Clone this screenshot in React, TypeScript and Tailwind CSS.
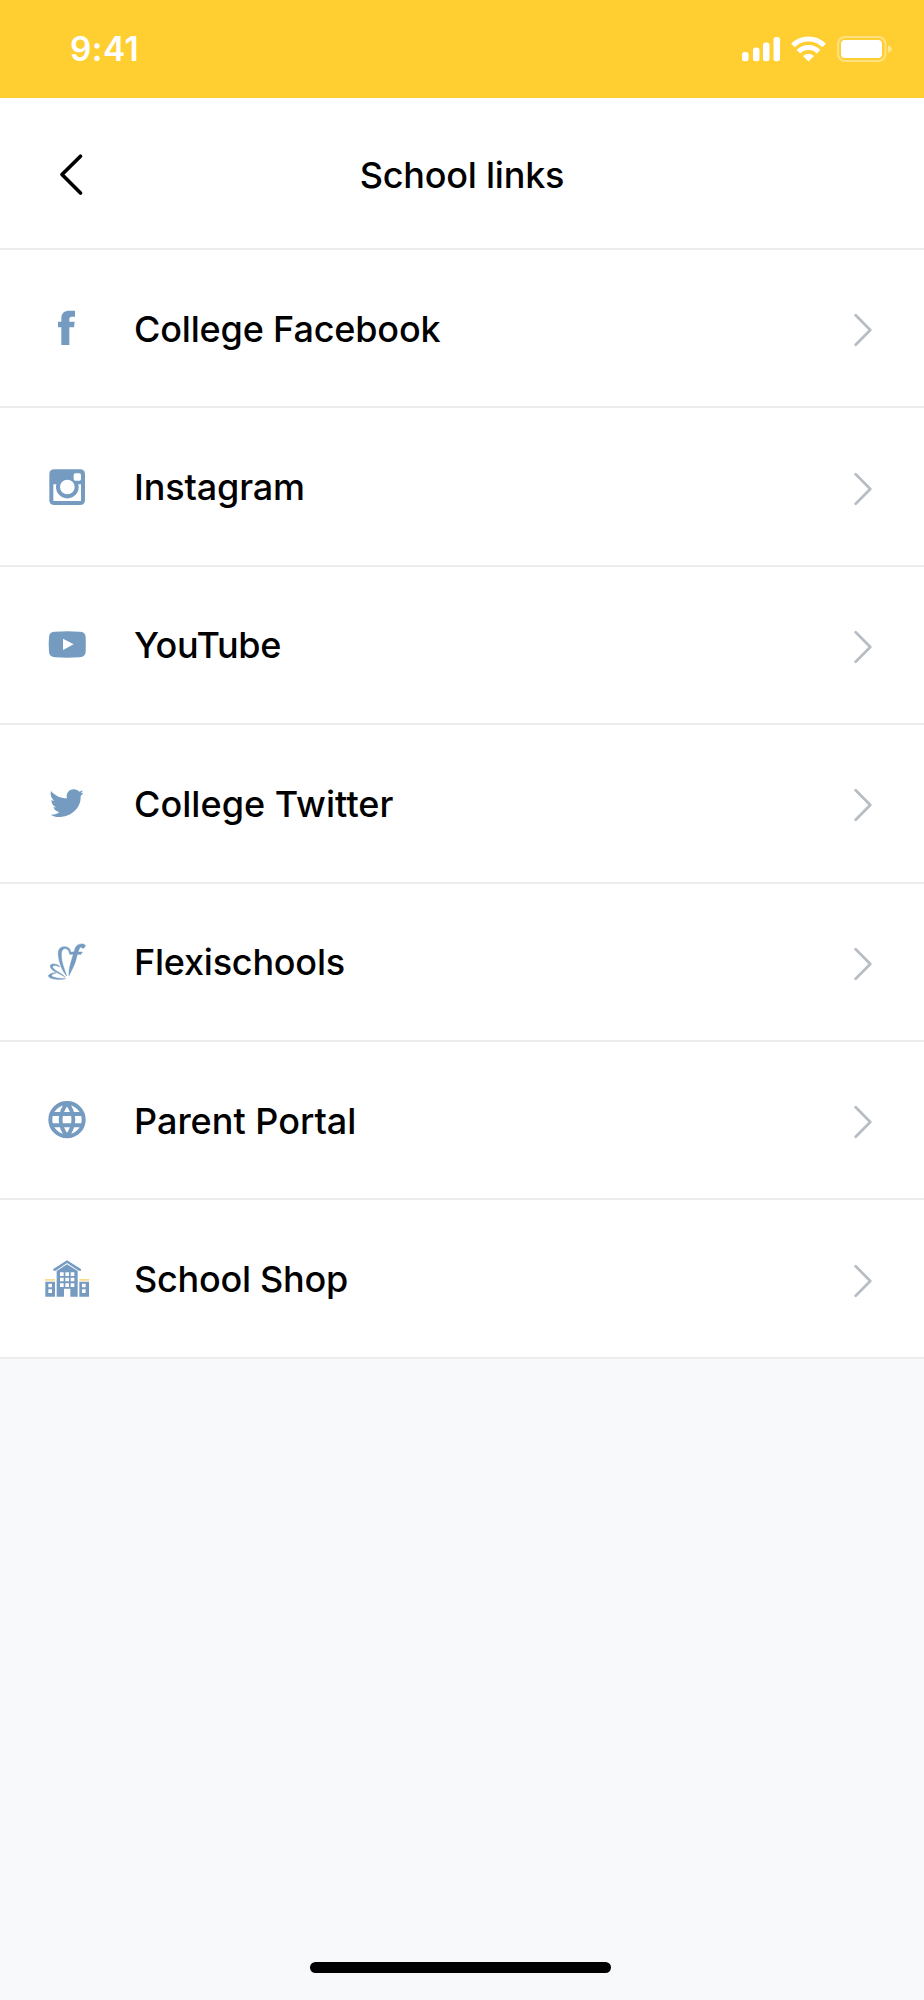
import type { ReactNode } from 'react';

const rows: { label: string; tracking: string; viewBox: string; icon: ReactNode }[] = [
  {
    label: 'College Facebook',
    tracking: 'tracking-[-0.17px]',
    viewBox: '2 -5 240 240',
    icon: <path d="M96 166V113H86V96H96V86C96 70 105 63 121 63H137V81H128C121 81 120 84 120 89V96H136L134 113H120V166Z" />,
  },
  {
    label: 'Instagram',
    tracking: 'tracking-[-0.14px]',
    viewBox: '0 -10 240 240',
    icon: (
      <path
        fillRule="evenodd"
        d="M73 57H150Q165 57 165 72V149Q165 164 150 164H73Q58 164 58 149V72Q58 57 73 57ZM136 69Q131 69 131 74V86Q131 91 136 91H148Q153 91 153 86V74Q153 69 148 69ZM70 102V152H153V102H145A34 34 0 1 1 79 102ZM112 88A22 22 0 1 0 112 132A22 22 0 1 0 112 88Z"
      />
    ),
  },
  {
    label: 'YouTube',
    tracking: 'tracking-[-0.35px]',
    viewBox: '0 -14 240 240',
    icon: (
      <path
        fillRule="evenodd"
        d="M75 66Q112 64 149 66Q166 66 167 82Q168 104 167 127Q166 142 149 143Q112 145 75 143Q58 142 57 127Q55 104 57 82Q58 66 75 66ZM99 87V121L131 104Z"
      />
    ),
  },
  {
    label: 'College Twitter',
    tracking: 'tracking-[0.04px]',
    viewBox: '0 -4 240 240',
    icon: (
      <path d="M63 80C75 94 91 102 111 102C107 88 117 75 131 75C139 75 144 78 148 82L158 78C157 82 155 85 152 87L160 85C158 89 155 92 152 95C154 133 121 158 87 158C77 158 69 156 62 151C72 152 81 149 88 143C80 142 73 137 70 129H79C70 126 64 118 64 107C67 109 70 109 73 110C63 102 60 91 63 80Z" />
    ),
  },
  {
    label: 'Flexischools',
    tracking: 'tracking-[-0.22px]',
    viewBox: '0 7 240 240',
    icon: (
      <g stroke="currentColor" strokeWidth="1.5">
        <path d="M166 77C160 70 142 71 136 84L132 97H121L119 104H130L123 127C119 142 116 154 117 168C124 154 131 141 136 127L142 104H153L157 97H144L148 87C150 82 154 81 157 86C163 86 165 83 166 77Z" />
        <path d="M121 101C124 89 115 81 103 81C90 81 83 91 85 106C87 128 95 151 110 169C104 149 94 129 94 106C94 90 102 84 110 88C115 90 118 95 118 101Z" />
        <path d="M88 139C80 132 66 130 61 137C58 154 89 160 106 173C94 158 67 151 68 141C69 136 80 136 88 142Z" />
        <path d="M77 159C67 159 56 163 55 169C60 180 89 181 106 177C90 177 67 174 65 169C64 164 71 162 77 161Z" />
      </g>
    ),
  },
  {
    label: 'Parent Portal',
    tracking: 'tracking-normal',
    viewBox: '0 2 240 240',
    icon: (
      <g fill="none" stroke="currentColor" strokeWidth="12">
        <circle cx="111" cy="121" r="50" />
        <path d="M64 104H158M64 138H158M111 71C86 103 86 139 111 171M111 71C136 103 136 139 111 171" />
      </g>
    ),
  },
  {
    label: 'School Shop',
    tracking: 'tracking-[-0.25px]',
    viewBox: '0 -2 240 240',
    icon: (
      <>
        <path d="M70 88L111 62L153 88V93H146L111 70L77 93H70Z" />
        <path
          fillRule="evenodd"
          d="M80 94L111 74L143 94V171H121V147H102V171H80ZM90 98V109H101V98ZM106 98V109H117V98ZM122 98V109H133V98ZM90 114V125H101V114ZM106 114V125H117V114ZM122 114V125H133V114ZM90 131V142H101V131ZM106 131V142H117V131ZM122 131V142H133V131Z"
        />
        <path
          fillRule="evenodd"
          d="M46 126H75V171H46ZM55 132V143H66V132ZM55 149V160H66V149ZM148 126H177V171H148ZM156 132V143H167V132ZM156 149V160H167V149Z"
        />
        <path fill="#fbdc86" d="M45 118H75V123H45ZM148 118H178V123H148Z" />
      </>
    ),
  },
];

function StatusBar() {
  return (
    <header className="flex h-[98px] items-start justify-between bg-[#ffce31] pl-[70px] pr-[32px] text-white">
      <span className="mt-[24px] text-[33.500px] font-semibold leading-[50px] tracking-[0.4px]">9:41</span>
      <svg className="mt-[36px]" width="152" height="26" viewBox="740 36 152 26" fill="currentColor">
        <rect x="742" y="52" width="6.5" height="9.3" rx="2.500" />
        <rect x="753" y="47.5" width="6.5" height="13.8" rx="2.500" />
        <rect x="763" y="42.5" width="6.5" height="18.8" rx="2.500" />
        <rect x="773.5" y="37" width="6.5" height="24.3" rx="2.500" />
        <g fill="none" stroke="currentColor" strokeWidth="5">
          <path d="M792.9 45.6A22 22 0 0 1 824.1 45.6" />
          <path d="M798.4 51.7A14.2 14.2 0 0 1 818.6 51.7" />
        </g>
        <path d="M803 56Q808.500 51.500 814 56L808.500 61.500Z" />
        <rect x="838" y="37" width="47.500" height="24" rx="7" fill="none" stroke="currentColor" strokeWidth="2" opacity=".4" />
        <rect x="841" y="40" width="41" height="18" rx="4" />
        <path d="M888 45Q892 47 892 49T888 53Z" opacity=".45" />
      </svg>
    </header>
  );
}

export default function App() {
  return (
    <main className="flex h-[2000px] w-[924px] flex-col overflow-hidden bg-[#f8f9fb] font-['Inter',sans-serif] text-black">
      <StatusBar />
      <div className="grid h-[152px] grid-cols-[134px_1fr_134px] items-center border-b-2 border-[#ededed] bg-white pt-[3px]">
        <svg className="ml-[56px]" width="30" height="46" viewBox="56 151.500 30 46" fill="none" stroke="currentColor" strokeWidth="3.700" strokeLinecap="round" strokeLinejoin="round">
          <path d="M80.500 155.700L62 174L80.500 192.500" />
        </svg>
        <h1 className="text-center text-[36px] font-medium leading-[48px] tracking-[-0.23px]">School links</h1>
      </div>
      <ul className="flex flex-col">
        {rows.map((row) => (
          <li key={row.label} className="flex h-[158.400px] items-center border-b-2 border-[#ededed] bg-white pl-[30px] pr-[50px]">
            <svg className="shrink-0 text-[#759bc1]" width="80" height="80" viewBox={row.viewBox} fill="currentColor">
              {row.icon}
            </svg>
            <span className={`ml-[24px] mt-[1px] flex-1 text-[36px] font-medium leading-[48px] ${row.tracking}`}>{row.label}</span>
            <svg className="mt-[4px]" width="20" height="34" viewBox="0 0 20 34" fill="none" stroke="#b7bdc4" strokeWidth="2.700" strokeLinecap="round" strokeLinejoin="round">
              <path d="M1.700 2.300L16.300 17L1.700 31.700" />
            </svg>
          </li>
        ))}
      </ul>
      <div className="mb-[27px] ml-[310px] mt-auto h-[11px] w-[301px] rounded-full bg-black" />
    </main>
  );
}
